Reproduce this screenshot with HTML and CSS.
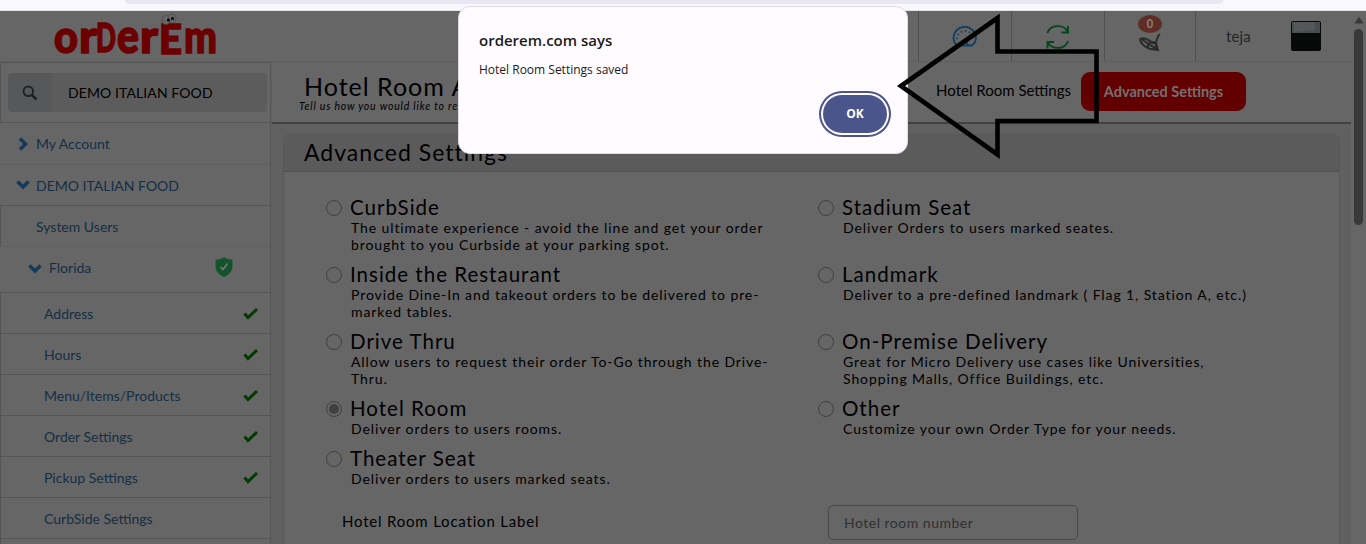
FILE: index.html
```html
<!DOCTYPE html>
<html lang="en">
<head>
<meta charset="utf-8">
<title>Hotel Room Advanced Settings</title>
<link rel="stylesheet" href="styles.css">
</head>
<body>
<div class="chrome"><div class="omnibox"></div></div>
<div class="viewport">
  <header class="topbar">
    <svg class="logo" width="170" height="48" viewBox="0 0 170 48">
      <g class="logo-text">
        <text x="1" y="41" font-size="46" textLength="24" lengthAdjust="spacingAndGlyphs">o</text>
        <text x="26" y="41" font-size="46" textLength="18" lengthAdjust="spacingAndGlyphs">r</text>
        <text x="43" y="40" font-size="40" textLength="20" lengthAdjust="spacingAndGlyphs">D</text>
        <text x="64" y="41" font-size="48" textLength="22" lengthAdjust="spacingAndGlyphs">e</text>
        <text x="87" y="41" font-size="46" textLength="18" lengthAdjust="spacingAndGlyphs">r</text>
        <text x="106" y="42" font-size="41" textLength="23" lengthAdjust="spacingAndGlyphs">E</text>
        <text x="131" y="41" font-size="46" textLength="33" lengthAdjust="spacingAndGlyphs">m</text>
      </g>
      <ellipse cx="113" cy="8" rx="4" ry="4.5" fill="#686868" stroke="#444" stroke-width=".7"/>
      <ellipse cx="119" cy="6.500" rx="4" ry="4.500" fill="#686868" stroke="#444" stroke-width=".7"/>
      <circle cx="115.500" cy="8" r="1.500"/><circle cx="119.500" cy="6.500" r="1.500"/>
    </svg>
    <nav class="tools">
      <div class="tool">
        <svg width="26" height="22" viewBox="0 0 26 22" fill="none" stroke="#103e60" stroke-width="1.800"><path d="M5.500 19.500C2.800 17.500 1.500 15 1.500 12a11.200 11.200 0 0 1 22.400 0c0 3-1.300 5.500-4 7.500z"/><path d="M5 13a8 8 0 0 1 16 0" stroke-dasharray="1.500 2.600"/><path d="M10.500 19a2.500 2.500 0 0 1 5 0M13 16l5-6"/></svg>
      </div>
      <div class="tool">
        <svg width="24" height="26" viewBox="0 0 24 26" fill="none" stroke="#05461d" stroke-width="1.900"><path d="M1.500 9C4 0 19 0 21.500 8M22 2v6.500h-6.500M22 17C20 26 4 26 2 18M1.500 24.500V18H8"/></svg>
      </div>
      <div class="tool bell">
        <span class="count">0</span>
        <svg width="24" height="19" viewBox="0 0 24 19" fill="none" stroke="#2b2b2b" stroke-width="2"><path d="M2 6c3-2 10 1 14 5M2 6c0 4 4 7 8 9M3 6l17 11M12 10c2-2 6-1 6 2s-3 5-6 4-3-5 0-6zM22 1c-3 2-3 5-4 9l2 7-7-1"/></svg>
      </div>
      <div class="user"><span>teja</span>
        <svg width="30" height="30" viewBox="0 0 30 30"><rect width="30" height="30" rx="2" fill="#070808"/><path d="M1 1h28v11H1z" fill="#4a4d4d"/><path d="M2 1h22v8L3 11z" fill="#555858"/></svg>
      </div>
    </nav>
  </header>
  <div class="columns">
    <aside class="sidebar">
      <div class="search"><div class="searchbox"><span class="searchicon"><svg width="16" height="16" viewBox="0 0 16 16" fill="none" stroke="#222" stroke-width="2"><circle cx="6.300" cy="6.300" r="4.800"/><path d="M10 10l4.500 4.500" stroke-width="2.600"/></svg></span><span class="searchtext">DEMO ITALIAN FOOD</span></div></div>
      <div class="row top"><svg class="chev" width="14" height="14" viewBox="0 0 14 14"><path d="M4 1.500L9.500 7 4 12.500"/></svg><span>My Account</span></div>
      <div class="row top dark"><svg class="chev" width="14" height="14" viewBox="0 0 14 14"><path d="M1.500 3.500L7 9l5.500-5.500"/></svg><span class="wide">DEMO ITALIAN FOOD</span></div>
      <div class="row users"><span>System Users</span></div>
      <div class="row florida"><svg class="chev" width="14" height="14" viewBox="0 0 14 14"><path d="M1.500 5.500L7 11l5.500-5.500"/></svg><span>Florida</span><svg class="shield" width="18" height="20" viewBox="0 0 18 20"><path d="M9 0c2.500 1.800 5 2.500 8.500 2.700v6C17.500 14 14 18 9 20 4 18 .5 14 .5 8.700v-6C4 2.500 6.500 1.800 9 0z" fill="#14532c"/><path d="M5.500 10l2.500 2.500 4.500-6" fill="none" stroke="#777" stroke-width="1.600"/></svg></div>
      <div class="row item"><span>Address</span><svg class="tick" width="16" height="13" viewBox="0 0 16 13"><path d="M1.500 6.500l3.500 4L14 2"/></svg></div>
      <div class="row item"><span>Hours</span><svg class="tick" width="16" height="13" viewBox="0 0 16 13"><path d="M1.500 6.500l3.500 4L14 2"/></svg></div>
      <div class="row item"><span>Menu/Items/Products</span><svg class="tick" width="16" height="13" viewBox="0 0 16 13"><path d="M1.500 6.500l3.500 4L14 2"/></svg></div>
      <div class="row item"><span>Order Settings</span><svg class="tick" width="16" height="13" viewBox="0 0 16 13"><path d="M1.500 6.500l3.500 4L14 2"/></svg></div>
      <div class="row item"><span>Pickup Settings</span><svg class="tick" width="16" height="13" viewBox="0 0 16 13"><path d="M1.500 6.500l3.500 4L14 2"/></svg></div>
      <div class="row item"><span>CurbSide Settings</span></div>
      <div class="row item"></div>
    </aside>
    <main class="main">
      <div class="titlebar">
        <div class="titles"><h1>Hotel Room Advanced</h1><p>Tell us how you would like to receive</p></div>
        <div class="tabs"><span class="tab">Hotel Room Settings</span><span class="tab active">Advanced Settings</span></div>
      </div>
      <section class="panel">
        <h2>Advanced Settings</h2>
        <div class="options">
          <div class="option"><i class="radio"></i><div><h3>CurbSide</h3><p>The ultimate experience - avoid the line and get your order<br>brought to you Curbside at your parking spot.</p></div></div>
          <div class="option"><i class="radio"></i><div><h3>Stadium Seat</h3><p>Deliver Orders to users marked seates.</p></div></div>
          <div class="option"><i class="radio"></i><div><h3>Inside the Restaurant</h3><p>Provide Dine-In and takeout orders to be delivered to pre-<br>marked tables.</p></div></div>
          <div class="option"><i class="radio"></i><div><h3>Landmark</h3><p>Deliver to a pre-defined landmark ( Flag 1, Station A, etc.)</p></div></div>
          <div class="option"><i class="radio"></i><div><h3>Drive Thru</h3><p>Allow users to request their order To-Go through the Drive-<br>Thru.</p></div></div>
          <div class="option"><i class="radio"></i><div><h3>On-Premise Delivery</h3><p>Great for Micro Delivery use cases like Universities,<br>Shopping Malls, Office Buildings, etc.</p></div></div>
          <div class="option"><i class="radio checked"></i><div><h3>Hotel Room</h3><p>Deliver orders to users rooms.</p></div></div>
          <div class="option"><i class="radio"></i><div><h3>Other</h3><p>Customize your own Order Type for your needs.</p></div></div>
          <div class="option"><i class="radio"></i><div><h3>Theater Seat</h3><p>Deliver orders to users marked seats.</p></div></div>
        </div>
        <div class="field"><span class="label">Hotel Room Location Label</span><div class="inputs"><div class="input">Hotel room number</div><div class="input group"><span class="addon"></span></div></div></div>
      </section>
    </main>
    <div class="scroll"></div>
  </div>
</div>
<div class="scrollbar"><svg width="10" height="8" viewBox="0 0 10 8"><path d="M5 .500L9.500 7.500H.5z" fill="#393939"/></svg><div class="thumb"></div></div>
<div class="dialog">
  <div class="dialog-title">orderem.com says</div>
  <div class="dialog-text">Hotel Room Settings saved</div>
  <div class="ok">OK</div>
</div>
<svg class="arrow" width="210" height="150" viewBox="0 0 210 150"><path d="M8 76L104.500 8v33.500H203.500v69.500H104.500v33.500z"/></svg>
</body>
</html>
```
FILE: styles.css
```css
* { box-sizing: border-box; margin: 0; padding: 0; }
body { width: 1366px; height: 544px; overflow: hidden; position: relative; background: #666; font-family: Lato, "Liberation Sans", sans-serif; color: #000; white-space: nowrap; }
h1, h2, h3 { font-weight: 400; }
svg { display: block; flex: none; }
.chrome { height: 11px; background: #faf8ff; border-bottom: 1px solid #e3e1ec; padding-left: 125px; }
.omnibox { width: 1098px; height: 4px; background: #e9e7f2; border-radius: 0 0 14px 14px; }
.topbar { height: 51px; display: flex; justify-content: space-between; border-bottom: 1px solid #5e5e5e; padding: 0 15px 0 53px; }
.logo { margin-top: 1px; }
.logo-text { font-family: Lato, sans-serif; font-weight: 900; fill: #6b0000; stroke: #6b0000; stroke-width: 1.5px; }
.tools { display: flex; height: 50px; }
.tool { width: 93px; border-left: 1px solid #505050; display: flex; flex-direction: column; align-items: center; padding-top: 15px; }
.tool:nth-child(2) { padding-top: 13px; }
.bell { width: 91px; padding-top: 4px; }
.count { width: 24px; height: 18px; border-radius: 50%; background: #5e2d26; color: #8a8582; font: 600 12px/18px "Open Sans", sans-serif; text-align: center; }
.user { width: 156px; border-left: 1px solid #505050; display: flex; align-items: center; gap: 40px; padding-left: 30px; color: #252525; font-size: 15px; letter-spacing: .1px; }
.columns { display: flex; height: 482px; }
.sidebar { width: 271px; border-right: 1px solid #565656; color: #142f45; font-size: 14px; }
.search { height: 61px; border: 1px solid #565656; border-right: 0; padding: 10px 3px 0 7px; }
.searchbox { height: 39px; border-radius: 4px; background: #5c5c5c; display: flex; align-items: center; overflow: hidden; }
.searchicon { width: 44px; height: 39px; background: #565859; display: flex; align-items: center; justify-content: center; }
.searchtext { color: #000; font-size: 14px; margin-left: 16px; letter-spacing: .1px; }
.row { height: 41px; display: flex; align-items: center; border-bottom: 1px solid #555; }
.row.top { padding-left: 16px; gap: 6px; border-color: #5f5f5f; height: 42px; }
.row.top.dark { border-color: #555; height: 41px; }
.chev path { fill: none; stroke: #153a59; stroke-width: 3.5px; }
.row.users { padding-left: 35px; border-color: #606060; border-left: 1px solid #555; }
.row.florida { height: 46px; padding: 0 37px 5px 28px; gap: 7px; }
.shield { margin-left: auto; }
.row.item { padding: 0 11px 0 43px; border-left: 1px solid #555; justify-content: space-between; }
.tick path { fill: none; stroke: #003b00; stroke-width: 3px; }
.main { flex: 1; background: #606060; padding-left: 1px; min-width: 0; }
.titlebar { height: 62px; background: #666; border-bottom: 2px solid #414141; display: flex; justify-content: space-between; padding-right: 105px; }
.titles { padding: 9px 0 0 27px; }
.titles h1 { font-size: 25px; line-height: 30px; margin-left: 5px; letter-spacing: 1px; }
.titles p { font-size: 10.500px; line-height: 12px; margin-top: -1px; font-style: italic; letter-spacing: .8px; }
.tabs { display: flex; align-items: flex-start; padding-top: 10px; gap: 10px; }
.tab { line-height: 37px; font-size: 15px; }
.tab.active { height: 39px; line-height: 39px; width: 165px; text-align: center; background: #620000; color: #747070; border-radius: 9px; font-weight: 700; font-size: 14.500px; }
.panel { margin: 10px 11px 0 11px; height: 500px; border: 1px solid #585858; border-radius: 6px 6px 0 0; background: #666; }
.panel h2 { height: 37px; background: #5b5b5b; border-bottom: 1px solid #525252; font-size: 23px; line-height: 34px; padding-left: 20px; letter-spacing: 1px; border-radius: 5px 5px 0 0; }
.options { display: grid; grid-template-columns: 492px 492px; padding: 23px 0 0 42px; }
.option { display: flex; gap: 8px; padding-bottom: 9px; }
.radio { width: 16px; height: 16px; flex: none; margin-top: 5px; border: 1.500px solid #404040; border-radius: 50%; display: flex; }
.radio.checked::after { content: ""; width: 10px; height: 10px; margin: auto; border-radius: 50%; background: #404040; }
.option h3 { font-size: 20.500px; line-height: 24px; letter-spacing: 1px; }
.option p { font-size: 14px; line-height: 17px; letter-spacing: .9px; padding-left: 1px; }
.field { display: flex; padding: 9px 0 0 58px; }
.label { width: 486px; font-size: 15px; line-height: 33px; letter-spacing: .8px; }
.inputs { display: grid; gap: 7px; }
.input { width: 250px; height: 35px; border: 1px solid #484848; border-radius: 5px; line-height: 33px; padding-left: 15px; font-size: 14px; letter-spacing: .5px; color: #303030; }
.input.group { display: flex; justify-content: flex-end; }
.addon { width: 33px; background: #595959; }
.scroll { width: 15px; background: #666; }
.scrollbar { position: absolute; right: 0; top: 11px; width: 15px; height: 533px; padding: 5px 3px; background: #666; }
.thumb { width: 9px; height: 196px; margin-top: 5px; border-radius: 5px; background: #393939; }
.dialog { position: absolute; left: 458px; top: 6px; width: 450px; height: 148px; border: 1px solid #dddbe4; border-radius: 12px; background: #fffbff; padding: 24px 20px; color: #1c1b20; font-family: "Open Sans", sans-serif; }
.dialog-title { font-size: 15px; line-height: 18px; font-weight: 600; }
.dialog-text { font-size: 12px; line-height: 18px; margin-top: 12px; }
.ok { width: 64px; height: 38px; margin: 16px 0 0 344px; border-radius: 19px; background: #4a558b; color: #fff; font-size: 12px; font-weight: 700; line-height: 38px; text-align: center; box-shadow: 0 0 0 2px #fffbff, 0 0 0 4px #4a558b; }
.arrow { position: absolute; left: 893px; top: 10px; }
.arrow path { fill: none; stroke: #000; stroke-width: 4.600px; }
```
